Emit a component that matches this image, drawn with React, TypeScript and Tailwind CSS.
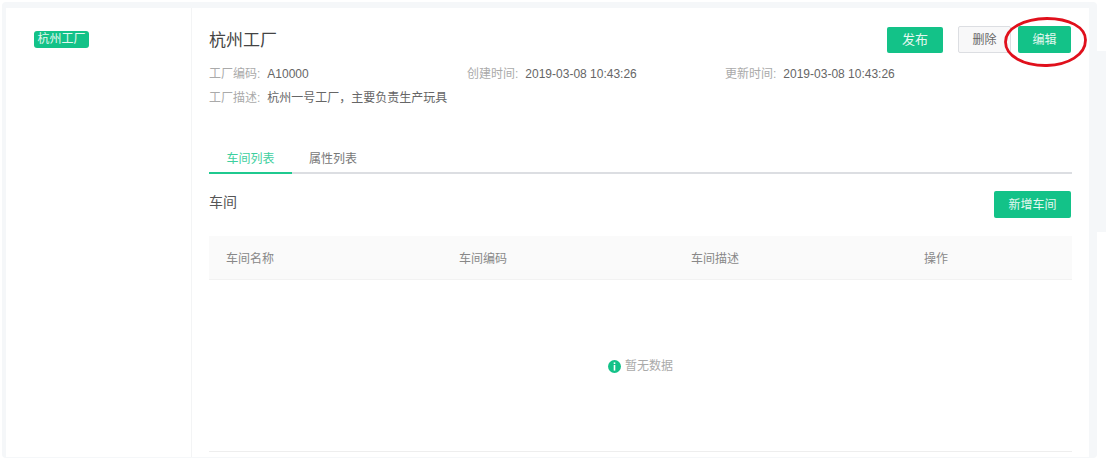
const font = { fontFamily: '"Liberation Sans", "Noto Sans CJK SC", sans-serif' };

const columns = ['车间名称', '车间编码', '车间描述', '操作'];

export default function App() {
  return (
    <div className="relative flex h-[463px] w-[1106px] overflow-hidden bg-white" style={font}>
      {/* gray page frame */}
      <div className="ml-[2px] mt-[2px] h-[456px] w-[1095px] rounded-sm bg-[#f5f7f9] pl-[4px] pr-[8px] pt-[6px]">
        <div className="flex h-[449px] bg-white">
          <aside className="w-[186px] shrink-0 border-r border-[#f3f4f5] pl-[28px] pt-[23px]">
            <span className="block h-[17px] w-[55px] rounded-[3px] bg-[#13c288] text-center text-[12px] leading-[17px] text-[#e4f8f0]">
              杭州工厂
            </span>
          </aside>

          <main className="flex min-w-0 flex-1 flex-col pl-[17px] pr-[17px]">
            <div className="flex items-start justify-between pt-[18px]">
              <h1 className="pt-[1px] text-[17px] leading-[27px] text-[#444]">杭州工厂</h1>
              <div className="mr-px flex items-start">
                <button className="mt-px h-[26px] w-[56px] rounded-[2px] bg-[#13c288] text-[13px] text-[#e4f8f0]">发布</button>
                <button className="ml-[15px] h-[27px] w-[53px] rounded-[2px] border border-[#dcdee2] bg-[#f8f8f9] text-[12px] text-[#666]">删除</button>
                <button className="ml-[7px] h-[27px] w-[53px] rounded-[2px] bg-[#13c288] text-[12px] text-[#e4f8f0]">编辑</button>
              </div>
            </div>

            <div className="mt-[8px] grid grid-cols-[258px_258px_1fr] text-[12px] leading-[24px] text-[#666]">
              <div><span className="mr-[7px] text-[#aaa]">工厂编码:</span>A10000</div>
              <div><span className="mr-[7px] text-[#aaa]">创建时间:</span>2019-03-08 10:43:26</div>
              <div><span className="mr-[7px] text-[#aaa]">更新时间:</span>2019-03-08 10:43:26</div>
              <div className="col-span-3"><span className="mr-[7px] text-[#aaa]">工厂描述:</span>杭州一号工厂，主要负责生产玩具</div>
            </div>

            <div className="mt-[36px] flex h-[28px] border-b-2 border-[#dcdee2] text-[12px]">
              <div className="h-[28px] w-[83px] border-b-2 border-[#1fc98f] text-center leading-[26px] text-[#3dcf9e]">车间列表</div>
              <div className="w-[82px] text-center leading-[26px] text-[#777]">属性列表</div>
            </div>

            <div className="mt-[17px] flex items-start justify-between">
              <h2 className="pt-[1px] text-[14px] leading-[21px] text-[#555]">车间</h2>
              <button className="mr-px h-[27px] w-[77px] rounded-[2px] bg-[#13c288] text-[12px] text-[#e4f8f0]">新增车间</button>
            </div>

            <div className="mt-[18px] grid h-[44px] grid-cols-[233px_232px_233px_1fr] items-center border-b border-[#f2f2f2] bg-[#fafafa] pt-[2px] text-[12px] text-[#888]">
              {columns.map(c => (
                <div key={c} className="pl-[17px]">{c}</div>
              ))}
            </div>

            <div className="flex h-[172px] items-center justify-center border-b border-[#eeeeee] pt-[1px] text-[12px] text-[#aaa]">
              <svg width="13" height="13" viewBox="0 0 13 13" className="mr-[4px]">
                <circle cx="6.5" cy="6.5" r="6.5" fill="#13c288" />
                <rect x="5.7" y="2.4" width="1.6" height="1.6" fill="#fff" />
                <rect x="5.7" y="5" width="1.6" height="5.6" fill="#fff" />
              </svg>
              暂无数据
            </div>
          </main>
        </div>
      </div>

      {/* strip of the next panel on the right edge */}
      <div className="mt-[51px] h-[181px] w-[9px] bg-[#f5f7f9]" />

      {/* red hand-drawn annotation */}
      <svg className="absolute left-[1000px] top-[14px]" width="92" height="56" viewBox="0 0 92 56" fill="none">
        <path
          d="M5.5 28C5.5 14 24 5 47 4.5C69 4.5 85.5 13 85.5 26C85.5 41 68 51 47 51.5C24 52 5.5 42 5.5 28Z"
          stroke="#e0101c"
          strokeWidth="2.8"
        />
      </svg>
    </div>
  );
}
